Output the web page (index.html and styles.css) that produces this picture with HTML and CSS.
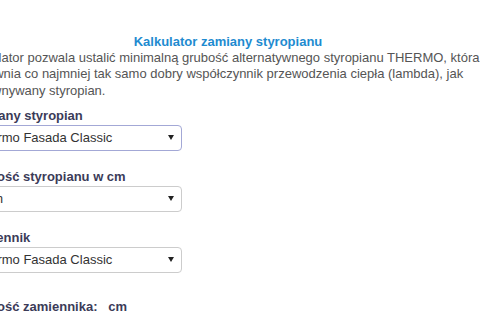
FILE: index.html
```html
<!DOCTYPE html>
<html lang="pl">
<head>
    <meta charset="UTF-8">
    <meta name="viewport" content="width=device-width, initial-scale=1.0">
    <title>Kalkulator zamiany styropianu</title>
    <link rel="stylesheet" href="styles.css">
</head>
<body>

<!-- Kalkulator -->
<div class="calc">
    <h2 class="calc-title">Kalkulator zamiany styropianu</h2>
    <p class="calc-intro">Kalkulator pozwala ustalić minimalną grubość alternatywnego styropianu THERMO, która zapewnia co najmniej tak samo dobry współczynnik przewodzenia ciepła (lambda), jak porównywany styropian.</p>

    <form class="calc-form">
        <div class="form-group">
            <label for="styropian">Wybrany styropian</label>
            <select id="styropian" class="form-control focused">
                <option>Thermo Fasada Classic</option>
            </select>
        </div>

        <div class="form-group">
            <label for="grubosc">Grubość styropianu w cm</label>
            <select id="grubosc" class="form-control">
                <option>5 cm</option>
            </select>
        </div>

        <div class="form-group">
            <label for="zamiennik">Zamiennik</label>
            <select id="zamiennik" class="form-control">
                <option>Thermo Fasada Classic</option>
            </select>
        </div>

        <div class="result">Grubość zamiennika: <span id="wynik">&nbsp;</span> cm</div>
    </form>
</div>

</body>
</html>
```

FILE: styles.css
```css
body {
    font-family: "Liberation Sans", Arial, sans-serif;
    font-size: 13px;
    margin: 0;
    padding: 0;
    background-color: #fff;
    color: #555;
}

/* Kalkulator */
.calc {
    width: 524px;
    margin-left: -34px;
    padding-top: 34px;
}

.calc-title {
    font-size: 13px;
    font-weight: bold;
    color: #1e8bd0;
    text-align: center;
    line-height: 16px;
    margin: 0;
}

.calc-intro {
    margin: 0;
    line-height: 16.3px;
}

.calc-form {
    margin-top: 9px;
    width: 250px;
}

.form-group {
    margin-bottom: 18px;
}

.form-group label,
.result {
    display: block;
    font-weight: bold;
    color: #3b3b58;
    line-height: 16px;
    margin-bottom: 1px;
}

.form-control {
    appearance: none;
    -webkit-appearance: none;
    display: block;
    width: 216px;
    height: 26px;
    padding: 0 20px 0 8px;
    font-family: inherit;
    font-size: 13px;
    color: #333;
    background: #fff url("data:image/svg+xml,%3Csvg xmlns='http://www.w3.org/2000/svg' width='6' height='5'%3E%3Cpath d='M0 0h6L3 5z' fill='%23222'/%3E%3C/svg%3E") no-repeat right 7px center;
    border: 1px solid #ccc;
    border-radius: 4px;
}

.form-control.focused {
    border-color: #a3a8d6;
}

.result {
    margin-top: 26px;
}
```
